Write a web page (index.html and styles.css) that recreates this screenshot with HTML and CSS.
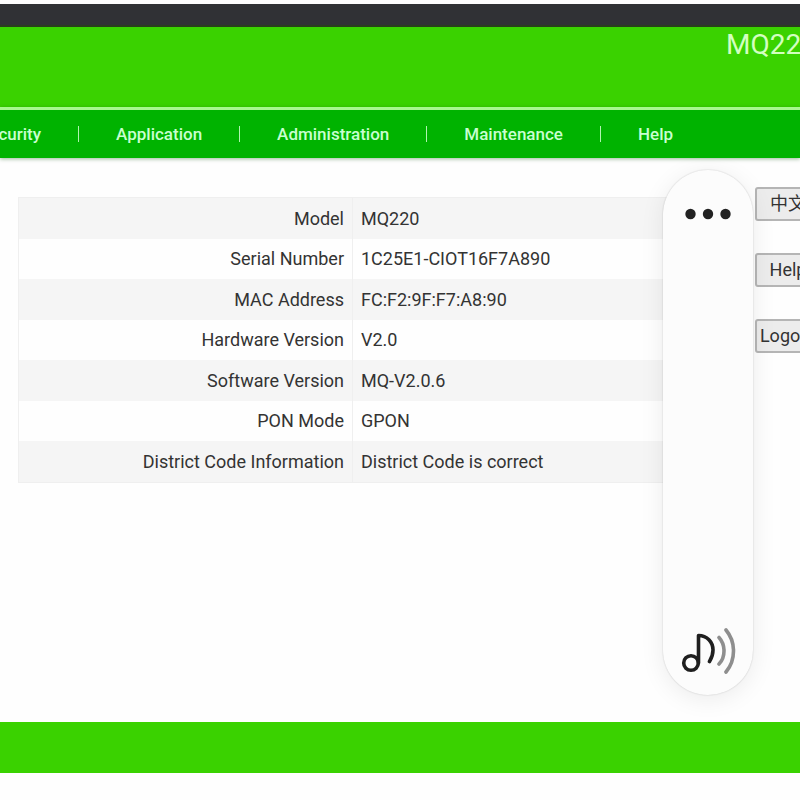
FILE: index.html
```html
<!DOCTYPE html>
<html lang="en">
<head>
  <meta charset="UTF-8">
  <meta name="viewport" content="width=device-width, initial-scale=1.0">
  <title>MQ220 - Device Information</title>
  <link rel="stylesheet" href="styles.css">
</head>
<body>
  <div class="top-strip"></div>

  <!-- Header -->
  <header class="banner">
    <h1>MQ220</h1>
  </header>

  <!-- Main menu -->
  <nav class="menu">
    <ul>
      <li><a href="#security">Security</a></li>
      <li><a href="#application">Application</a></li>
      <li><a href="#administration">Administration</a></li>
      <li><a href="#maintenance">Maintenance</a></li>
      <li><a href="#help">Help</a></li>
    </ul>
  </nav>

  <!-- Device information -->
  <main class="content">
    <table class="info">
      <tbody>
        <tr><th scope="row">Model</th><td>MQ220</td></tr>
        <tr><th scope="row">Serial Number</th><td>1C25E1-CIOT16F7A890</td></tr>
        <tr><th scope="row">MAC Address</th><td>FC:F2:9F:F7:A8:90</td></tr>
        <tr><th scope="row">Hardware Version</th><td>V2.0</td></tr>
        <tr><th scope="row">Software Version</th><td>MQ-V2.0.6</td></tr>
        <tr><th scope="row">PON Mode</th><td>GPON</td></tr>
        <tr><th scope="row">District Code Information</th><td>District Code is correct</td></tr>
      </tbody>
    </table>
    <div class="actions">
      <button type="button">中文</button>
      <button type="button">Help</button>
      <button type="button">Logout</button>
    </div>
  </main>

  <footer class="footer"></footer>

  <!-- Floating volume panel -->
  <div class="volume">
    <button type="button" aria-label="More">
      <svg width="48" height="12" viewBox="0 0 48 12" fill="#222">
        <circle cx="6.500" cy="6" r="5.200"/>
        <circle cx="24" cy="6" r="5.200"/>
        <circle cx="41.500" cy="6" r="5.200"/>
      </svg>
    </button>
    <button type="button" aria-label="Media volume">
      <svg width="56" height="48" viewBox="0 0 56 48" fill="none" stroke-width="3.600" stroke-linecap="round" stroke-linejoin="round">
        <circle cx="11" cy="35" r="7.300" stroke="#1f1f1f"/>
        <path d="M18.500 35V7.500C27 7.500 33 14 33 22Q33 28 29.500 33.500" stroke="#1f1f1f"/>
        <path d="M39 9.500Q44 15 44 23T39 36" stroke="#8e8e8e"/>
        <path d="M46 2Q53.500 11 53.500 23T46 44" stroke="#8e8e8e"/>
      </svg>
    </button>
  </div>
</body>
</html>
```

FILE: styles.css
```css
* {
  margin: 0;
  padding: 0;
  box-sizing: border-box;
}

body {
  display: flex;
  flex-direction: column;
  min-height: 100vh;
  padding: 4px 0 27px;
  overflow: hidden;
  background-color: #fefefe;
  color: #333;
  font-family: Roboto, "Noto Sans CJK SC", sans-serif;
  font-size: 18px;
  line-height: 24px;
}

.top-strip {
  height: 23px;
  background-color: #303135;
  border-bottom: 2px solid #293e1d;
}

/* Header */
.banner {
  display: flex;
  justify-content: flex-end;
  height: 80px;
  background-color: #3ad200;
}

.banner h1 {
  margin-right: -17px;
  color: #d3ffc0;
  font-size: 28px;
  font-weight: 400;
  line-height: 36px;
}

/* Menu */
.menu {
  position: relative;
  height: 51px;
  border-top: 3px solid #a8f78f;
  background-color: #00b300;
  box-shadow: 0 1px 4px rgba(0, 80, 0, 0.4);
}

.menu ul {
  display: flex;
  margin-left: -21px;
  list-style: none;
}

.menu li {
  display: flex;
  align-items: center;
  height: 47px;
}

.menu li + li::before {
  content: "";
  width: 1px;
  height: 16px;
  margin: 0 37px;
  background-color: #b0f5b0;
}

.menu a {
  color: #c8ffd0;
  font-size: 17px;
  font-weight: 500;
  text-decoration: none;
}

/* Device information */
.content {
  display: flex;
  flex: 1;
  align-items: flex-start;
  gap: 20px;
  padding: 29px 0 0 18px;
}

.info {
  flex: 1;
  margin-top: 10px;
  border: 1px solid #efefef;
  border-spacing: 0;
  table-layout: fixed;
}

.info th,
.info td {
  height: 40px;
  padding: 0 8px;
  text-align: left;
}

.info th {
  width: 334px;
  border-right: 1px solid #efefef;
  font-weight: 400;
  text-align: right;
}

.info tr:nth-child(odd) > * {
  height: 41px;
  background-color: #f5f5f5;
}

/* Language, help and logout */
.actions {
  display: flex;
  flex-direction: column;
  gap: 32px;
  width: 66px;
  margin-right: -21px;
}

.actions button {
  height: 34px;
  border: 2px solid #b5b5b5;
  border-radius: 3px;
  background-color: #ececec;
  color: #333;
  font: inherit;
}

/* Footer */
.footer {
  height: 51px;
  background-color: #3ad200;
}

/* Floating volume panel */
.volume {
  position: fixed;
  top: 170px;
  right: 47px;
  display: flex;
  flex-direction: column;
  align-items: center;
  justify-content: space-between;
  width: 90px;
  height: 525px;
  padding: 38px 0 19px;
  border-radius: 45px;
  background-color: #fcfcfc;
  box-shadow: 0 0 2px rgba(0, 0, 0, 0.2), 0 4px 24px rgba(0, 0, 0, 0.08);
}

.volume button {
  border: none;
  background: none;
}

.volume svg {
  display: block;
}
```
